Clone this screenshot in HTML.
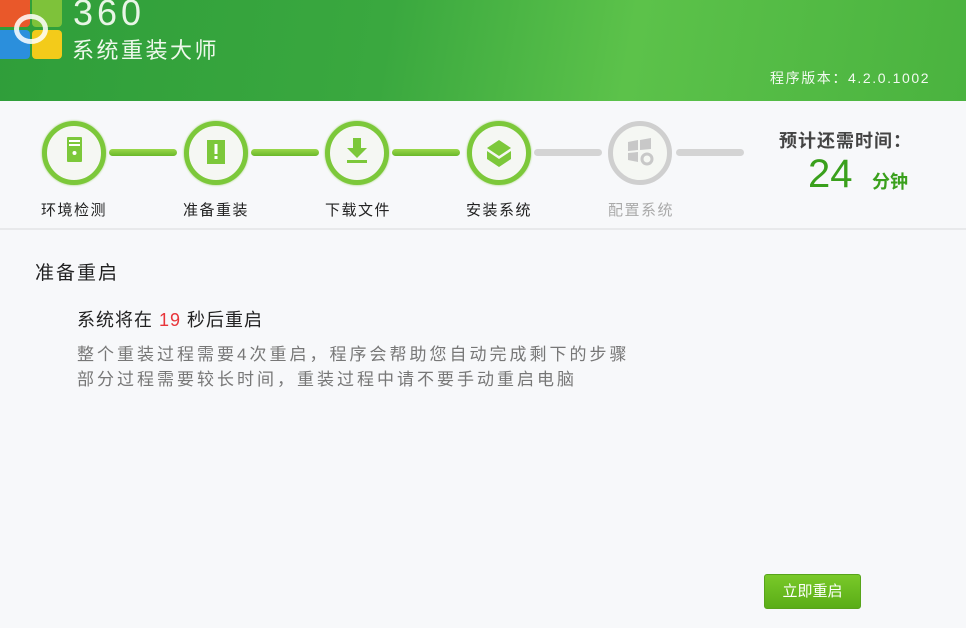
<!DOCTYPE html>
<html><head><meta charset="utf-8"><style>
*{margin:0;padding:0;box-sizing:border-box}
body{width:966px;height:628px;overflow:hidden;background:#f7f8fa;font-family:"Liberation Sans","Noto Sans CJK SC",sans-serif;position:relative}
.hdr{position:absolute;left:0;top:0;width:966px;height:101px;background:linear-gradient(100deg,#2f9e3a 0%,#3aa83f 40%,#5cc24a 65%,#4ab33f 100%)}
.t{position:absolute;white-space:nowrap}
.c{position:absolute;width:64px;height:64px;border-radius:50%;border:5px solid #7cc83a;background:#f5f7f3;top:121px;box-shadow:0 0 2px #9bd06a}
.c.g{border-color:#cfcfcf;box-shadow:none}
.ln{position:absolute;top:149px;height:7px;border-radius:4px;background:linear-gradient(#9ad84a,#6ab82a);width:68px}
.ln.g{background:#d4d4d4}
.lb{position:absolute;top:199px;font-size:15px;color:#222;letter-spacing:1.5px}
</style></head><body>
<div class="hdr"></div>
<div style="position:absolute;left:0;top:0;width:30px;height:27px;background:#e9582a;border-radius:0 0 4px 0"></div>
<div style="position:absolute;left:32px;top:0;width:30px;height:27px;background:#7ec23a;border-radius:0 0 4px 4px"></div>
<div style="position:absolute;left:0;top:30px;width:30px;height:29px;background:#2b8fdc;border-radius:0 4px 4px 0"></div>
<div style="position:absolute;left:32px;top:30px;width:30px;height:29px;background:#f3cb1a;border-radius:4px"></div>
<div style="position:absolute;left:14px;top:14px;width:34px;height:30px;border:5px solid rgba(255,255,255,.85);border-radius:50%"></div>
<div class="t" style="left:73px;top:-8px;font-size:36px;color:#e8f5e6;letter-spacing:4px">360</div>
<div class="t" style="left:72px;top:33px;font-size:22px;color:#eef8ec;letter-spacing:2.5px">系统重装大师</div>
<div class="t" style="left:770px;top:68px;font-size:14px;color:#f2faf0;letter-spacing:1.6px">程序版本：4.2.0.1002</div>

<div class="c" style="left:42px"><svg width="54" height="54" viewBox="0 0 54 54"><rect x="20" y="11" width="15" height="25" rx="1" fill="#7cc83a"/><rect x="22" y="14" width="11" height="2" fill="#fff"/><rect x="22" y="18" width="11" height="2" fill="#fff"/><circle cx="27.5" cy="27" r="2" fill="#fff"/></svg></div>
<div class="ln" style="left:109px"></div>
<div class="c" style="left:184px"><svg width="54" height="54" viewBox="0 0 54 54"><path d="M18 14h18v24h-18z" fill="#7cc83a"/><rect x="25.5" y="18" width="3" height="10" fill="#fff"/><rect x="25.5" y="30" width="3" height="3" fill="#fff"/></svg></div>
<div class="ln" style="left:251px"></div>
<div class="c" style="left:325px"><svg width="54" height="54" viewBox="0 0 54 54"><path d="M23 12h8v10h6l-10 10-10-10h6z" fill="#7cc83a"/><rect x="17" y="34" width="20" height="3" fill="#7cc83a"/></svg></div>
<div class="ln" style="left:392px"></div>
<div class="c" style="left:467px"><svg width="54" height="54" viewBox="0 0 54 54"><path d="M15 22l12-8 12 8-12 8z M15 25l12 8 12-8v8l-12 8-12-8z" fill="#7cc83a"/></svg></div>
<div class="ln g" style="left:534px"></div>
<div class="c g" style="left:608px"><svg width="54" height="54" viewBox="0 0 54 54"><path d="M15 16l10-2v10l-10 1z M27 14l11-2v11l-11 1z M15 27l10-1v10l-10-2z" fill="#c8c8c8"/><circle cx="34" cy="33" r="5" fill="none" stroke="#c8c8c8" stroke-width="3"/></svg></div>
<div class="ln g" style="left:676px"></div>

<div class="lb" style="left:41px">环境检测</div>
<div class="lb" style="left:183px">准备重装</div>
<div class="lb" style="left:325px">下载文件</div>
<div class="lb" style="left:466px">安装系统</div>
<div class="lb" style="left:608px;color:#aaa">配置系统</div>

<div class="t" style="left:779px;top:127px;font-size:18px;color:#444;font-weight:bold;letter-spacing:1px">预计还需时间：</div>
<div class="t" style="left:808px;top:152px;font-size:40px;color:#3aa01c">24</div>
<div class="t" style="left:872px;top:168px;font-size:18px;color:#3aa01c;font-weight:bold">分钟</div>

<div style="position:absolute;left:0;top:228px;width:966px;height:2px;background:#e8e9eb"></div>
<div class="t" style="left:35px;top:258px;font-size:19px;color:#222;letter-spacing:2px">准备重启</div>
<div class="t" style="left:77px;top:306px;font-size:18px;color:#222;letter-spacing:1px">系统将在 <span style="color:#e8353a">19</span> 秒后重启</div>
<div class="t" style="left:77px;top:342px;font-size:17px;color:#777;line-height:25px;letter-spacing:3px">整个重装过程需要4次重启，程序会帮助您自动完成剩下的步骤<br>部分过程需要较长时间，重装过程中请不要手动重启电脑</div>

<div style="position:absolute;left:764px;top:574px;width:97px;height:35px;border-radius:3px;background:linear-gradient(#79c929,#5aad17);border:1px solid #57a41a;color:#fff;font-size:15px;text-align:center;line-height:33px">立即重启</div>
</body></html>
